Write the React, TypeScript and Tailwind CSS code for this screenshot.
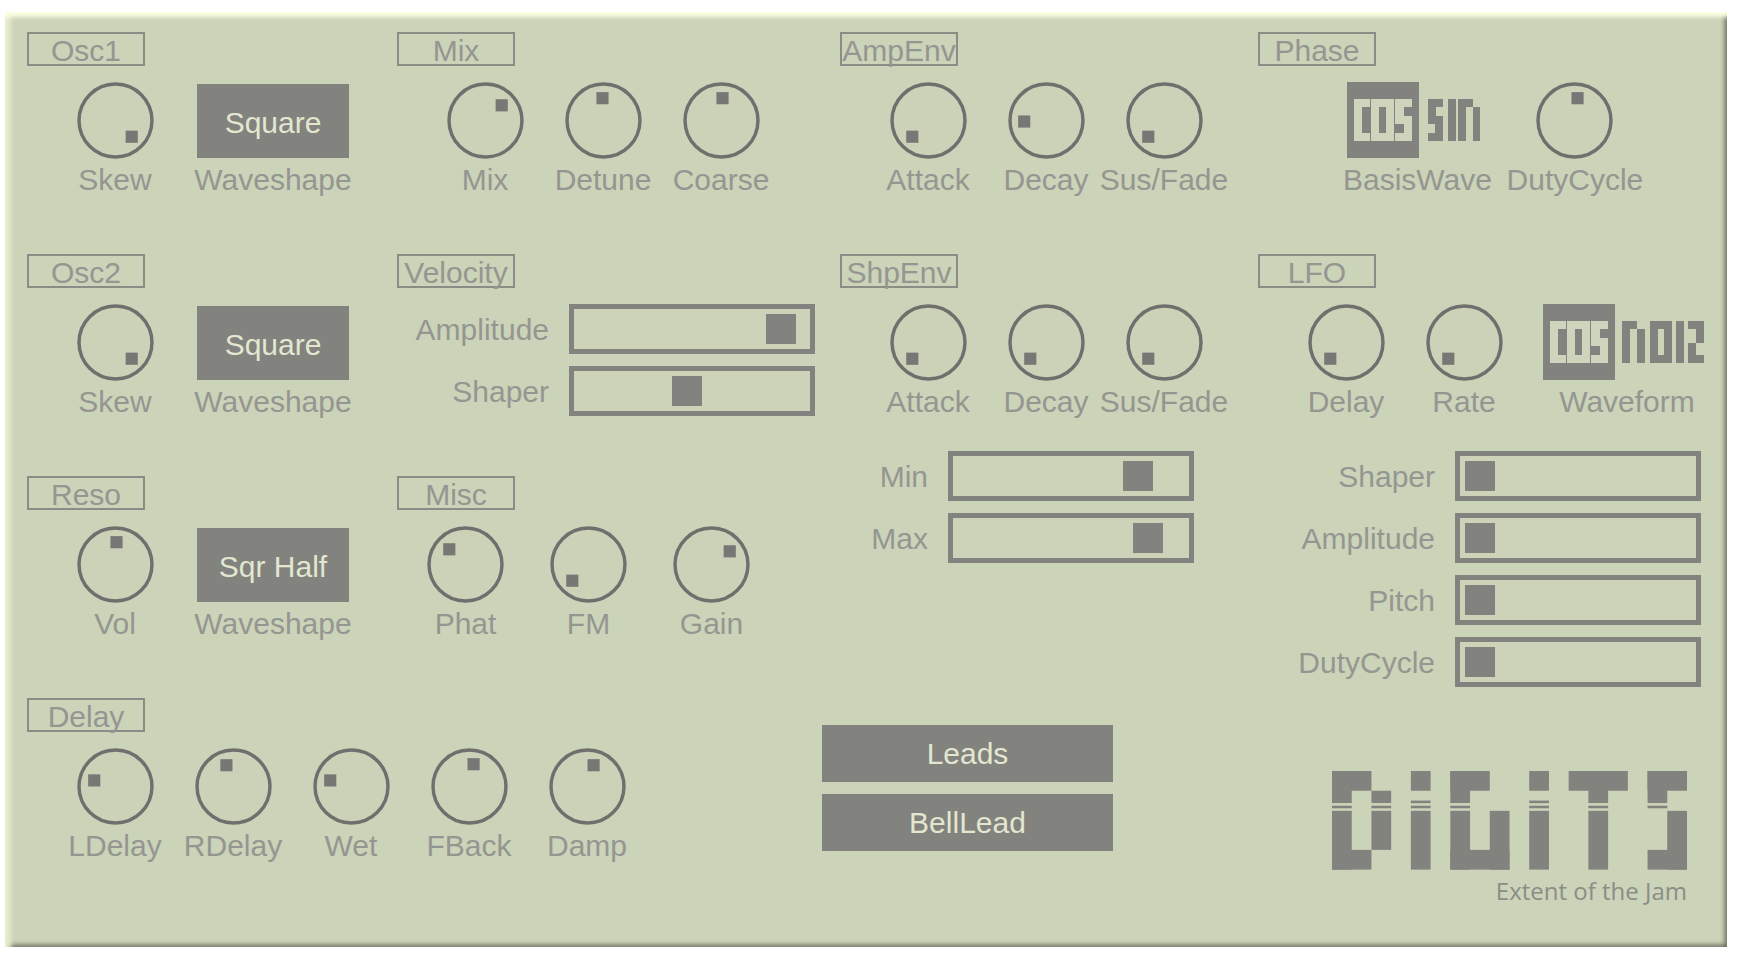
import { useId, useState } from "react";
import type { ReactNode } from "react";

interface KnobProps {
  label: string;
  initial: number;
  wide?: boolean;
}

interface SliderProps {
  label: string;
  initial: number;
  labelClass: string;
}

// x, y, width, height
type Block = [number, number, number, number];

interface WaveGlyph {
  name: string;
  width: number;
  blocks: Block[];
}

const KNOB_SWEEP = 270;
const DOT_RADIUS = 22;

const WAVE_SHAPES = ["Square", "Sqr Half", "Saw", "Triangle"];

const COS: WaveGlyph = {
  name: "cos",
  width: 58,
  blocks: [
    [0, 0, 8, 42],
    [0, 0, 16, 8],
    [0, 34, 16, 8],
    [17, 0, 8, 42],
    [32, 0, 8, 42],
    [17, 0, 23, 8],
    [17, 34, 23, 8],
    [41, 0, 17, 8],
    [41, 0, 9, 25],
    [50, 17, 8, 25],
    [41, 34, 17, 8],
  ],
};

const SIN: WaveGlyph = {
  name: "sin",
  width: 54,
  blocks: [
    [2, 0, 15, 8],
    [2, 0, 8, 25],
    [9, 17, 8, 25],
    [2, 34, 15, 8],
    [22, 0, 8, 42],
    [32, 0, 8, 42],
    [32, 0, 15, 8],
    [47, 8, 7, 34],
  ],
};

const NOIZ: WaveGlyph = {
  name: "noiz",
  width: 82,
  blocks: [
    [0, 0, 8, 42],
    [0, 0, 15, 8],
    [15, 8, 8, 34],
    [28, 0, 8, 42],
    [42, 0, 8, 42],
    [28, 0, 22, 8],
    [28, 34, 22, 8],
    [54, 0, 8, 42],
    [66, 0, 16, 8],
    [74, 0, 8, 22],
    [66, 22, 8, 20],
    [66, 34, 16, 8],
  ],
};

const LOGO_BLOCKS: Block[] = [
  // D
  [0, 0, 40, 20],
  [0, 0, 20, 32.5],
  [0, 35.2, 20, 2.6],
  [0, 40.4, 20, 59.6],
  [0, 80, 40, 20],
  [40, 20, 20, 12.5],
  [40, 35.2, 20, 2.6],
  [40, 40.4, 20, 39.6],
  // i
  [80, 0, 20, 20],
  [80, 30, 20, 2.6],
  [80, 35.2, 20, 2.6],
  [80, 40.4, 20, 59.6],
  // G
  [120, 0, 40, 20],
  [120, 0, 20, 32.5],
  [120, 35.2, 20, 2.6],
  [120, 40.4, 20, 59.6],
  [120, 80, 60, 20],
  [160, 40.4, 20, 59.6],
  // i
  [200, 0, 20, 20],
  [200, 30, 20, 2.6],
  [200, 35.2, 20, 2.6],
  [200, 40.4, 20, 59.6],
  // T
  [240, 0, 60, 20],
  [260, 0, 20, 32.5],
  [260, 35.2, 20, 2.6],
  [260, 40.4, 20, 59.6],
  // S
  [320, 0, 40, 20],
  [320, 0, 20, 32.5],
  [320, 35.2, 20, 2.6],
  [340, 40.4, 20, 59.6],
  [320, 80, 40, 20],
];

function Blocks({ blocks }: { blocks: Block[] }) {
  return (
    <>
      {blocks.map(([x, y, width, height], index) => (
        <rect key={index} x={x} y={y} width={width} height={height} />
      ))}
    </>
  );
}

function Section({
  title,
  className = "",
  children,
}: {
  title: string;
  className?: string;
  children: ReactNode;
}) {
  return (
    <section className={className}>
      <h2 className="h-[34px] w-[118px] border-2 border-[#8b8c86] text-center text-[30px] leading-[34px] whitespace-nowrap">
        {title}
      </h2>
      {children}
    </section>
  );
}

function Knob({ label, initial, wide = false }: KnobProps) {
  const [value, setValue] = useState(initial);
  const id = useId();
  const angle = ((value - 0.5) * KNOB_SWEEP * Math.PI) / 180;
  const dotX = Math.round(38 + DOT_RADIUS * Math.sin(angle));
  const dotY = Math.round(38 - DOT_RADIUS * Math.cos(angle));

  return (
    <div
      className={`flex shrink-0 flex-col items-center ${wide ? "w-[123px]" : "w-[118px]"}`}
    >
      <div className="relative size-[77px]">
        <svg aria-hidden="true" viewBox="0 0 76 76" className="size-full">
          <circle
            cx="38"
            cy="38"
            r="36"
            fill="#ccd2b8"
            stroke="#6f706e"
            strokeWidth="3.4"
          />
          <rect
            x={dotX - 6}
            y={dotY - 6}
            width="12"
            height="12"
            fill="#777876"
          />
        </svg>
        <input
          id={id}
          type="range"
          min={0}
          max={1}
          step="any"
          value={value}
          onChange={(event) => setValue(Number(event.target.value))}
          className="absolute inset-0 size-full cursor-pointer opacity-0"
        />
      </div>
      <label
        htmlFor={id}
        className="mt-1 text-[30px] leading-[34px] whitespace-nowrap"
      >
        {label}
      </label>
    </div>
  );
}

function Slider({ label, initial, labelClass }: SliderProps) {
  const [value, setValue] = useState(initial);
  const id = useId();

  return (
    <div className="flex items-center gap-5">
      <label
        htmlFor={id}
        className={`shrink-0 pt-0.5 text-right text-[30px] leading-[34px] ${labelClass}`}
      >
        {label}
      </label>
      <input
        id={id}
        type="range"
        min={0}
        max={1}
        step="any"
        value={value}
        onChange={(event) => setValue(Number(event.target.value))}
        className={[
          "h-[50px] w-[246px] cursor-pointer appearance-none border-5 border-[#82827e] bg-[#cdd3b8] p-[5px]",
          "[&::-webkit-slider-thumb]:size-[30px] [&::-webkit-slider-thumb]:appearance-none",
          "[&::-webkit-slider-thumb]:rounded-none [&::-webkit-slider-thumb]:bg-[#82827e]",
        ].join(" ")}
      />
    </div>
  );
}

function WaveShape({ initial }: { initial: string }) {
  const id = useId();

  return (
    <div className="ml-[23px] flex w-[152px] flex-col items-center">
      <select
        id={id}
        defaultValue={initial}
        className="h-[74px] w-full cursor-pointer appearance-none bg-[#82827e] pt-0.5 text-center text-[30px] text-[#e2e7d0]"
      >
        {WAVE_SHAPES.map((shape) => (
          <option key={shape}>{shape}</option>
        ))}
      </select>
      <label
        htmlFor={id}
        className="mt-[5px] text-[30px] leading-[34px] whitespace-nowrap"
      >
        Waveshape
      </label>
    </div>
  );
}

function WaveToggle({
  legend,
  options,
}: {
  legend: string;
  options: WaveGlyph[];
}) {
  const [selected, setSelected] = useState(options[0].name);
  const id = useId();

  return (
    <div
      role="radiogroup"
      aria-labelledby={id}
      className="flex flex-col items-center"
    >
      <div className="flex h-[76px]">
        {options.map((option) => (
          <label
            key={option.name}
            className={`relative flex cursor-pointer items-center px-[7px] ${
              selected === option.name
                ? "bg-[#82827e] text-[#cfd5bc]"
                : "text-[#82827e]"
            }`}
          >
            <input
              type="radio"
              name={id}
              aria-label={option.name}
              checked={selected === option.name}
              onChange={() => setSelected(option.name)}
              className="sr-only"
            />
            <svg
              aria-hidden="true"
              width={option.width}
              height="42"
              viewBox={`0 0 ${option.width} 42`}
              fill="currentColor"
            >
              <Blocks blocks={option.blocks} />
            </svg>
          </label>
        ))}
      </div>
      <span
        id={id}
        className="mt-[5px] text-[30px] leading-[34px] whitespace-nowrap"
      >
        {legend}
      </span>
    </div>
  );
}

function Preset({ name, options }: { name: string; options: string[] }) {
  return (
    <select
      aria-label={name}
      className="h-[57px] w-[291px] cursor-pointer appearance-none bg-[#82827e] text-center text-[30px] text-[#e2e7d0]"
    >
      {options.map((option) => (
        <option key={option}>{option}</option>
      ))}
    </select>
  );
}

export default function App() {
  return (
    <div className="min-h-screen bg-white pt-3 pr-[11px] pb-[11px] pl-[5px] font-['Liberation_Sans',Arial,sans-serif] text-[#959691]">
      <main className="bg-[#cbd3b8] pt-5 pr-[14px] pb-10 pl-[22px] shadow-[inset_0_8px_4px_-3px_#fcffe3,inset_9px_0_5px_-3px_#e6edcf,inset_-5px_-5px_5px_-3px_#626556]">
        <div className="grid auto-rows-[222px] grid-cols-[370fr_443fr_418fr_455fr]">
          <Section title="Osc1">
            <div className="mt-4 flex items-end pl-[29px]">
              <Knob label="Skew" initial={1} />
              <WaveShape initial="Square" />
            </div>
          </Section>

          <Section title="Mix">
            <div className="mt-4 flex pl-[29px]">
              <Knob label="Mix" initial={0.67} />
              <Knob label="Detune" initial={0.49} />
              <Knob label="Coarse" initial={0.51} />
            </div>
          </Section>

          <Section title="AmpEnv">
            <div className="mt-4 flex pl-[29px]">
              <Knob label="Attack" initial={0} />
              <Knob label="Decay" initial={0.16} />
              <Knob label="Sus/Fade" initial={0} />
            </div>
          </Section>

          <Section title="Phase">
            <div className="mt-4 flex pl-[85px]">
              <WaveToggle legend="BasisWave" options={[COS, SIN]} />
              <div className="pl-6">
                <Knob label="DutyCycle" initial={0.53} />
              </div>
            </div>
          </Section>

          <Section title="Osc2">
            <div className="mt-4 flex items-end pl-[29px]">
              <Knob label="Skew" initial={1} />
              <WaveShape initial="Square" />
            </div>
          </Section>

          <Section title="Velocity">
            <div className="mt-4 flex flex-col gap-3">
              <Slider
                label="Amplitude"
                initial={0.954}
                labelClass="w-[152px]"
              />
              <Slider label="Shaper" initial={0.476} labelClass="w-[152px]" />
            </div>
          </Section>

          <Section title="ShpEnv" className="row-span-2">
            <div className="mt-4 flex pl-[29px]">
              <Knob label="Attack" initial={0} />
              <Knob label="Decay" initial={0} />
              <Knob label="Sus/Fade" initial={0} />
            </div>
            <div className="mt-8 flex flex-col gap-3">
              <Slider label="Min" initial={0.842} labelClass="w-[88px]" />
              <Slider label="Max" initial={0.893} labelClass="w-[88px]" />
            </div>
          </Section>

          <Section title="LFO" className="row-span-2">
            <div className="mt-4 flex pl-[29px]">
              <Knob label="Delay" initial={0} />
              <Knob label="Rate" initial={0} />
              <div className="pl-5">
                <WaveToggle legend="Waveform" options={[COS, NOIZ]} />
              </div>
            </div>
            <div className="mt-8 flex flex-col gap-3">
              <Slider label="Shaper" initial={0} labelClass="w-[177px]" />
              <Slider label="Amplitude" initial={0} labelClass="w-[177px]" />
              <Slider label="Pitch" initial={0} labelClass="w-[177px]" />
              <Slider label="DutyCycle" initial={0} labelClass="w-[177px]" />
            </div>
          </Section>

          <Section title="Reso">
            <div className="mt-4 flex items-end pl-[29px]">
              <Knob label="Vol" initial={0.51} />
              <WaveShape initial="Sqr Half" />
            </div>
          </Section>

          <Section title="Misc">
            <div className="mt-4 flex pl-[7px]">
              <Knob label="Phat" initial={0.33} wide />
              <Knob label="FM" initial={0} wide />
              <Knob label="Gain" initial={0.7} wide />
            </div>
          </Section>
        </div>

        <div className="grid grid-cols-[795fr_436fr_455fr]">
          <Section title="Delay">
            <div className="mt-4 flex pl-[29px]">
              <Knob label="LDelay" initial={0.225} />
              <Knob label="RDelay" initial={0.433} />
              <Knob label="Wet" initial={0.225} />
              <Knob label="FBack" initial={0.541} />
              <Knob label="Damp" initial={0.558} />
            </div>
          </Section>

          <div className="flex flex-col items-start gap-3 pt-[27px]">
            <Preset name="Bank" options={["Leads", "Basses", "Pads"]} />
            <Preset name="Preset" options={["BellLead", "SoftLead"]} />
          </div>

          <div className="flex flex-col items-end pt-[73px] pr-[26px]">
            <svg
              role="img"
              aria-label="Digits"
              viewBox="0 0 360 100"
              className="w-[355px]"
              fill="#82827e"
            >
              <Blocks blocks={LOGO_BLOCKS} />
            </svg>
            <p className="mt-1 font-['Open_Sans','Noto_Sans',sans-serif] text-[24px] leading-[33px] whitespace-nowrap text-[#8c8d86]">
              Extent of the Jam
            </p>
          </div>
        </div>
      </main>
    </div>
  );
}
